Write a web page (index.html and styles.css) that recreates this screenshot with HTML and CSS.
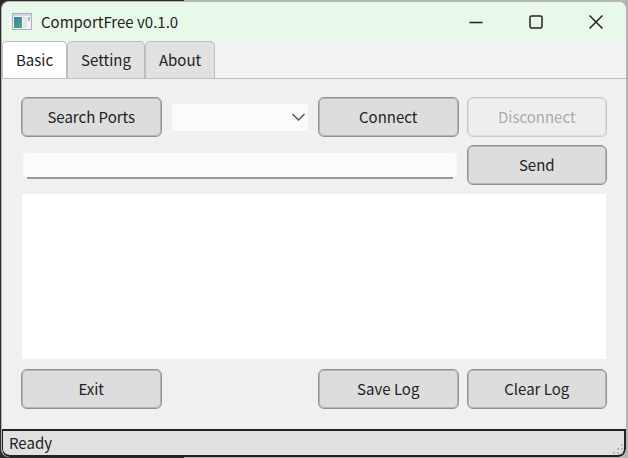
FILE: index.html
```
<!DOCTYPE html>
<html lang="en">
<head>
    <meta charset="UTF-8">
    <meta name="viewport" content="width=device-width, initial-scale=1.0">
    <title>ComportFree v0.1.0</title>
    <link rel="stylesheet" href="styles.css">
</head>
<body>
    <div class="window">
        <header class="titlebar">
            <svg class="app-icon" width="20" height="18" viewBox="0 0 20 18">
                <defs>
                    <linearGradient id="screen" x1="0" y1="0" x2="1" y2="1">
                        <stop offset="0" stop-color="#3f78b5"/>
                        <stop offset="1" stop-color="#4fae7c"/>
                    </linearGradient>
                </defs>
                <rect x="0.5" y="0.5" width="19" height="16" fill="#f3f3f6" stroke="#a9aeb5"/>
                <path d="M1 2h18" stroke="#d3d9e2" stroke-width="2"/>
                <rect x="2" y="4" width="8" height="11" fill="url(#screen)"/>
                <rect x="11" y="4" width="4" height="11" fill="#e4e4ea"/>
                <path d="M16 4h2v3l-2 2z" fill="#8fc0c4"/>
            </svg>
            <h1 class="title">ComportFree v0.1.0</h1>
            <div class="controls">
                <button class="control" type="button" aria-label="Minimize">
                    <svg width="14" height="14" viewBox="0 0 14 14"><path d="M0.5 7.5h13"/></svg>
                </button>
                <button class="control" type="button" aria-label="Maximize">
                    <svg width="14" height="14" viewBox="0 0 14 14"><rect x="1" y="1" width="12" height="12" rx="1.5"/></svg>
                </button>
                <button class="control" type="button" aria-label="Close">
                    <svg width="14" height="14" viewBox="0 0 14 14"><path d="M0.5 0.5l13 13M13.5 0.5l-13 13"/></svg>
                </button>
            </div>
        </header>

        <nav class="tabs" role="tablist">
            <button class="tab active" type="button" role="tab" aria-selected="true">Basic</button>
            <button class="tab" type="button" role="tab" aria-selected="false">Setting</button>
            <button class="tab" type="button" role="tab" aria-selected="false">About</button>
        </nav>

        <main class="panel">
            <div class="row">
                <button class="btn" type="button">Search Ports</button>
                <div class="combo">
                    <select class="ports" aria-label="Port"><option></option></select>
                    <svg class="arrow" width="13" height="8" viewBox="0 0 13 8"><path d="M0.5 1l6 6 6-6"/></svg>
                </div>
                <button class="btn" type="button">Connect</button>
                <button class="btn" type="button" disabled>Disconnect</button>
            </div>
            <div class="row">
                <div class="field"><input class="message" type="text" aria-label="Message"></div>
                <button class="btn" type="button">Send</button>
            </div>
            <textarea class="log" aria-label="Log" readonly></textarea>
            <div class="row">
                <button class="btn" type="button">Exit</button>
                <button class="btn save" type="button">Save Log</button>
                <button class="btn" type="button">Clear Log</button>
            </div>
        </main>

        <footer class="statusbar">
            <span>Ready</span>
            <svg class="grip" width="12" height="12" viewBox="0 0 12 12">
                <path d="M9 1h2v2h-2zM5 5h2v2h-2zM9 5h2v2h-2zM1 9h2v2h-2zM5 9h2v2h-2zM9 9h2v2h-2z"/>
            </svg>
        </footer>
    </div>
</body>
</html>
```
FILE: styles.css
```
*{padding:0;margin:0;box-sizing:border-box;}
body{
    display:flex;
    min-height:100vh;
    padding:1px;
    background:linear-gradient(to right,#2c2a2e 184px,#b4b4b4 184px);
    font-family:"Noto Sans CJK KR","Open Sans",sans-serif;
    font-size:15px;
    line-height:20px;
    color:#222;
}
button,input,select,textarea{font:inherit;color:inherit;}

.window{
    flex:1;
    display:flex;
    flex-direction:column;
    border:1px solid #b3b3b3;
    border-bottom:0;
    border-radius:8px;
    background:#f0f0f0;
    overflow:hidden;
}

/* title bar */
.titlebar{display:flex;align-items:center;height:39px;padding-left:10px;background:#e9f9e9;}
.app-icon{margin-right:9px;}
.title{flex:1;font-size:15px;font-weight:400;line-height:20px;}
.controls{display:flex;}
.control{width:60px;height:39px;border:0;background:none;}
.control svg{display:block;margin:0 auto;fill:none;stroke:#222;stroke-width:1.5;}

/* tabs */
.tabs{display:flex;background:#f3f3f3;border-bottom:1px solid #c0c0c0;}
.tab{
    height:37px;
    padding:0 13px;
    border:1px solid #bdbdbd;
    border-bottom:0;
    border-radius:5px 5px 0 0;
    background:#e1e1e1;
}
.tab.active{background:#fff;}

/* content */
.panel{flex:1;display:flex;flex-direction:column;gap:8px;padding:18px 19px 20px;}
.row{display:grid;grid-template-columns:repeat(4,1fr);gap:8px;}
.btn{height:40px;border:1px solid #939393;border-radius:6px;background:#ddd;box-shadow:inset 0 0 0 1px #b5b5b5;}
.btn:disabled{border-color:#c8c8c8;background:#efefef;box-shadow:inset 0 0 0 1px #dedede;color:#aaa;}
.save{grid-column:3;}

.combo{position:relative;display:flex;align-items:center;padding:0 2px;}
.ports{width:100%;height:27px;border:0;border-radius:4px;background:#fbfbfb;appearance:none;}
.arrow{position:absolute;right:5px;fill:none;stroke:#555;stroke-width:1.5;pointer-events:none;}

.field{grid-column:span 3;padding:8px 2px 6px;}
.message{width:100%;height:24px;padding:0 6px;border:0;border-radius:4px;background:#fbfbfb;display:block;}
.field::after{content:"";display:block;height:2px;margin:0 4px;background:#999;}

.log{flex:1;margin:1px 1px 2px;border:0;background:#fff;resize:none;}

/* status bar */
.statusbar{
    display:flex;
    align-items:center;
    justify-content:space-between;
    height:28px;
    padding-left:6px;
    border:2px solid #222;
    border-left-width:1px;
    border-radius:0 0 8px 8px;
    background:#e1e1e1;
}
.grip{align-self:flex-end;fill:#b5b5b5;}
```
